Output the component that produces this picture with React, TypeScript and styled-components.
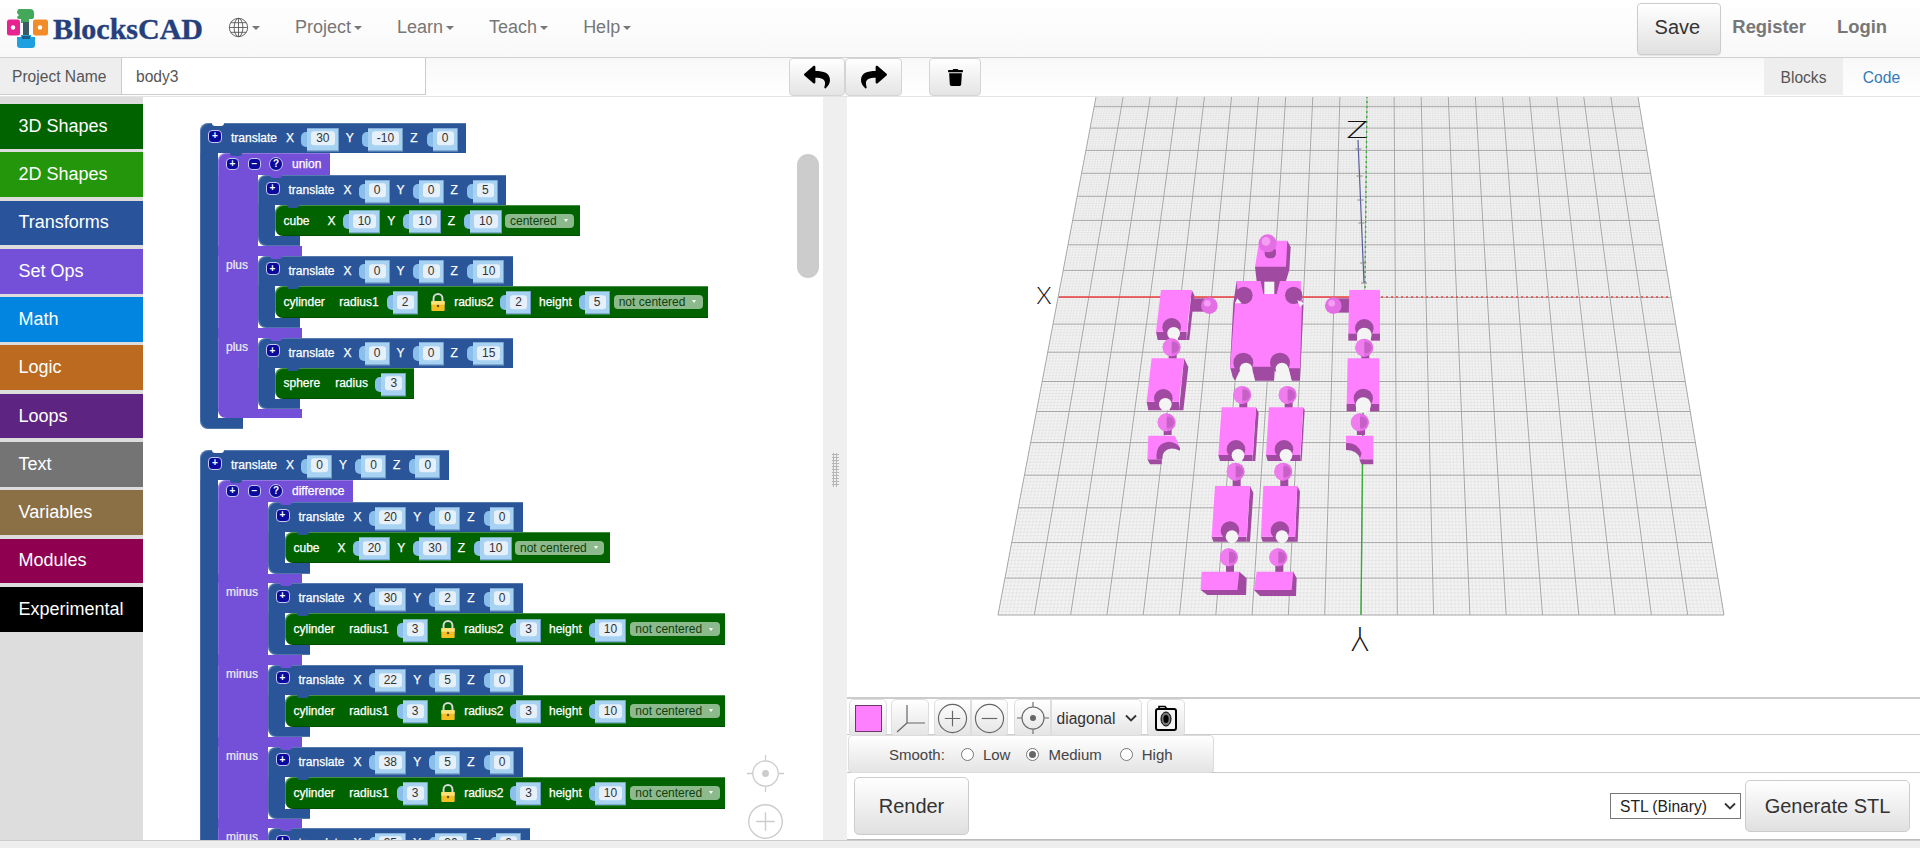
import React from "react";
import styled, { createGlobalStyle } from "styled-components";
import { FaReply, FaShare, FaTrash } from "react-icons/fa";

const Global = createGlobalStyle`
  html, body { margin: 0; padding: 0; background: #fff; }
  body { font-family: "Liberation Sans", Arial, sans-serif; overflow: hidden; }
  * { box-sizing: border-box; }
`;

const BLUE = "#2a5699";
const PURPLE = "#7450d9";
const GREEN = "#006300";

const Page = styled.div`
  width: 1920px; height: 848px; display: flex; flex-direction: column; overflow: hidden; background: #fff;
`;
const Navbar = styled.header`
  height: 58px; flex: none; display: flex; align-items: center; padding: 0 33px 0 7px;
  background: linear-gradient(#fff, #f8f8f8); border-bottom: 1px solid #d0d0d0;
`;
const Brand = styled.div`display: flex; align-items: center; width: 196px; height: 40px;`;
const BrandText = styled.span`
  font-family: "Liberation Serif", serif; font-weight: 700; font-size: 30px; color: #253f7c; margin-left: 4px; line-height: 1; -webkit-text-stroke: 0.4px #253f7c;
`;
const Caret = styled.span`
  display: inline-block; width: 0; height: 0; margin-left: 3px; vertical-align: middle;
  border-top: 4px solid #777; border-left: 4px solid transparent; border-right: 4px solid transparent;
`;
const GlobeWrap = styled.div`display: flex; align-items: center; margin: -2px 0 0 25px; width: 32px; color: #555;`;
const NavItem = styled.a`
  font-size: 18px; color: #777; margin: -3px 0 0 35px; white-space: nowrap; line-height: 24px;
`;
const SaveButton = styled.button`
  margin-left: auto; width: 84px; height: 52px; font: 20px "Liberation Sans", sans-serif; color: #333; margin-right: -1px; transform: translateX(2px);
  background: linear-gradient(#fff, #e0e0e0); border: 1px solid #ccc; border-radius: 4px; padding: 0 4px 2px 0;
  box-shadow: 0 1px 1px rgba(0,0,0,.08);
`;
const NavLink = styled.a<{ $ml: number }>`
  font-size: 18.4px; font-weight: 700; color: #777; margin-left: ${(p) => p.$ml}px; margin-top: -3px;
`;

const SubBar = styled.div`
  height: 39px; flex: none; display: flex; align-items: flex-start; background: linear-gradient(#f8f8f8, #fff);
  border-bottom: 1px solid #e4e4e4;
`;
const Addon = styled.div`
  width: 122px; height: 37px; background: #eee; border: 1px solid #ccc; border-width: 0 1px 1px 0;
  font-size: 15.6px; color: #555; display: flex; align-items: center; padding: 2px 0 0 12px;
`;
const NameInput = styled.div`
  width: 304px; height: 37px; background: #fff; border: 1px solid #ccc; border-width: 0 1px 1px 0;
  font-size: 15.6px; color: #555; display: flex; align-items: center; padding: 2px 0 0 14px;
`;
const ToolBtn = styled.button<{ $w: number; $ml?: number }>`
  width: ${(p) => p.$w}px; height: 38px; margin-left: ${(p) => p.$ml ?? 0}px; padding: 0; color: #000; display: flex; align-items: center; justify-content: center;
  background: linear-gradient(#fff, #e4e4e4); border: 1px solid #d4d4d4; border-radius: 4px;
`;
const Tab = styled.div<{ $active?: boolean }>`
  height: 37px; display: flex; align-items: center; justify-content: center; font-size: 15.6px; padding-top: 2px;
  width: ${(p) => (p.$active ? 79 : 77)}px; margin-left: ${(p) => (p.$active ? "auto" : "0")};
  background: ${(p) => (p.$active ? "#eee" : "transparent")}; color: ${(p) => (p.$active ? "#555" : "#337ab7")};
`;

const Main = styled.div`height: 743px; flex: none; display: flex;`;
const Sidebar = styled.nav`
  width: 143px; flex: none; background: #ddd; padding-top: 7px; display: flex; flex-direction: column; gap: 3.6px;
`;
const Category = styled.div<{ $c: string }>`
  height: 44.7px; background: ${(p) => p.$c}; color: #fff; font-size: 18px; padding-left: 18.5px; display: flex; align-items: center;
`;

const Workspace = styled.section`
  width: 680px; flex: none; position: relative; overflow: hidden; background: #fff; padding: 26px 0 0 57px;
  display: flex; flex-direction: column; align-items: flex-start; gap: 21.6px;
`;
const Scrollbar = styled.div`
  position: absolute; left: 654px; top: 57px; width: 22px; height: 124px; border-radius: 11px; background: #ccc;
`;
const WsControl = styled.div<{ $top: number }>`
  position: absolute; left: 604px; top: ${(p) => p.$top}px; width: 37px; height: 36px;
`;
const Divider = styled.div`
  width: 24px; flex: none; background: #efefef; display: flex; align-items: center; justify-content: center;
`;
const Grip = styled.div`
  width: 7px; height: 34px; transform: translateY(1px);
  background-image: radial-gradient(#b5b5b5 1px, transparent 1.2px); background-size: 3px 3px;
`;

const Viewer = styled.section`flex: 1; display: flex; flex-direction: column; min-width: 0;`;
const Canvas = styled.div`height: 600px; flex: none; background: #fff; overflow: hidden;`;
const Row = styled.div<{ $h: number; $top?: boolean }>`
  height: ${(p) => p.$h}px; flex: none; display: flex; align-items: flex-start; padding-left: 2px;
  background: #fff; border-bottom: 1px solid #ccc; ${(p) => (p.$top ? "border-top: 2px solid #ccc;" : "")}
`;
const Btn = styled.div<{ $w: number; $ml?: number; $join?: "l" | "r" }>`
  width: ${(p) => p.$w}px; height: 38px; margin-left: ${(p) => p.$ml ?? 0}px; display: flex; align-items: center; justify-content: center;
  background: linear-gradient(#fff, #e4e4e4); border: 1px solid #ddd; flex: none; color: #333;
  border-radius: ${(p) => (p.$join === "l" ? "5px 0 0 5px" : p.$join === "r" ? "0 5px 5px 0" : "5px")};
`;
const Swatch = styled.div`width: 27px; height: 27px; background: #ff80ff; border: 1px solid #6b3a6b;`;
const ViewSelect = styled.select`
  appearance: none; font: 15.6px "Liberation Sans", sans-serif; color: #333; background: transparent; border: 0; width: 68px; padding: 0; outline: 0;
`;
const SmoothGroup = styled.div`
  width: 366px; height: 38px; margin-left: -1px; display: flex; align-items: center; padding-left: 40px; font-size: 15px; color: #444;
  background: linear-gradient(#fff, #e4e4e4); border: 1px solid #ddd; border-radius: 4px; box-shadow: 0 1px 1px rgba(0,0,0,.1);
`;
const Radio = styled.span<{ $on?: boolean; $ml: number }>`
  width: 13px; height: 13px; border-radius: 50%; margin: 0 9px 0 ${(p) => p.$ml}px; flex: none; border: 1px solid #777; background: #fff; position: relative;
  ${(p) => (p.$on ? "&::after { content: ''; position: absolute; inset: 2px; border-radius: 50%; background: #666; }" : "")}
`;
const RenderRow = styled.div`
  height: 67px; flex: none; display: flex; align-items: center; padding: 0 10px 0 7px; background: #fff; border-bottom: 1px solid #bbb; position: relative;
`;
const BigBtn = styled.button<{ $w: number; $h: number }>`
  width: ${(p) => p.$w}px; height: ${(p) => p.$h}px; font: 20px "Liberation Sans", sans-serif; color: #333; padding: 0;
  background: linear-gradient(#fff, #e0e0e0); border: 1px solid #ccc; border-radius: 5px;
`;
const FormatBox = styled.div`
  margin-left: auto; margin-right: 4px; width: 131px; height: 26px; display: flex; align-items: center; background: #fff; border: 1px solid #777; padding-left: 9px;
`;
const FormatSelect = styled.select`
  appearance: none; width: 104px; font: 15.6px "Liberation Sans", sans-serif; color: #222; background: transparent; border: 0; padding: 0; outline: 0;
`;
const BottomBand = styled.div`flex: 1; background: #eee; border-top: 1px solid #ccc;`;

/* Blocks */
const CBlock = styled.div`display: flex; flex-direction: column; align-items: flex-start; flex: none;`;
const Notched = styled.div<{ $c: string; $parent: string; $h: number; $pl: number; $pr?: number }>`
  position: relative; display: flex; align-items: center; flex: none; white-space: nowrap;
  height: ${(p) => p.$h}px; background: ${(p) => p.$c}; padding: 0 ${(p) => p.$pr ?? 8.5}px 0 ${(p) => p.$pl}px; color: #fff; font-size: 12px;
  border-radius: 8px 0 0 0;
  box-shadow: inset 1px 1px 0 rgba(255,255,255,.22);
  &::before {
    content: ""; position: absolute; left: 12px; top: 0; width: 12px; height: 3px; background: ${(p) => p.$parent};
    border-radius: 0 0 6px 6px;
  }
`;
const GreenShape = styled(Notched)`
  border-radius: 8px 0 0 8px;
  box-shadow: inset 1px 1px 0 rgba(255,255,255,.28), inset 0 -1px 0 rgba(0,0,0,.2);
`;
const CBody = styled.div`display: flex; align-items: stretch;`;
const CArm = styled.div<{ $c: string; $w: number }>`
  width: ${(p) => p.$w}px; flex: none; background: ${(p) => p.$c}; box-shadow: inset 1px 0 0 rgba(255,255,255,.14);
`;
const CFoot = styled.div<{ $c: string; $w: number; $h: number }>`
  width: ${(p) => p.$w}px; height: ${(p) => p.$h}px; background: ${(p) => p.$c}; border-radius: 0 0 0 8px; box-shadow: inset 1px -1px 0 rgba(255,255,255,.18);
`;
const Label = styled.span<{ $ml?: number }>`
  margin-left: ${(p) => p.$ml ?? 0}px; font-size: 12px; line-height: 14px; color: #fff; -webkit-text-stroke: 0.25px #fff;
`;
const MiniBtn = styled.span<{ $ml?: number; $round?: boolean; $w?: number; $h?: number }>`
  width: ${(p) => p.$w ?? 14}px; height: ${(p) => p.$h ?? 13}px; margin-left: ${(p) => p.$ml ?? 0}px; flex: none; display: flex; align-items: center; justify-content: center;
  background: #0a0a9c; border: 1px solid #c8c8ee; color: #fff; font-size: 10px; font-weight: 700; line-height: 1;
  border-radius: ${(p) => (p.$round ? "50%" : "4px")};
`;
const PlusAt = styled(MiniBtn)`position: relative; top: -2px;`;
const Bump = styled.span<{ $ml: number }>`
  width: 6px; height: 15px; margin-left: ${(p) => p.$ml}px; flex: none; background: #8bbfeb; border-radius: 5px 0 0 5px; transform: translateY(1px);
`;
const FieldBox = styled.span<{ $mr?: number }>`
  height: 23px; display: flex; align-items: center; padding: 0 4px 2px; background: #a8d2f2; margin-right: ${(p) => p.$mr ?? 7}px; flex: none; transform: translateY(1.3px);
  box-shadow: inset -1px -1px 0 #6f9cc8;
`;
const FieldText = styled.span`
  height: 14px; padding: 0 5.15px; line-height: 14px; text-align: center; background: #e6f0fa; color: #333; font-size: 12px; border-radius: 3px;
`;
const Drop = styled.span<{ $ml: number }>`
  height: 14px; margin-left: ${(p) => p.$ml}px; padding: 0 6.5px 0 5px; border-radius: 4px; background: #8cba8c; color: #0f3f0f; font-size: 12px; line-height: 14px; display: flex; align-items: center; gap: 7px; flex: none;
  &::after { content: ""; width: 0; height: 0; border-top: 3px solid #fff; border-left: 2px solid transparent; border-right: 2px solid transparent; }
`;
const SetRow = styled.div`display: flex; align-items: stretch;`;
const SetArm = styled.div<{ $w: number }>`
  width: ${(p) => p.$w}px; flex: none; background: ${PURPLE}; padding: 2px 0 0 8.5px; color: #eee; font-size: 12px; line-height: 14px; box-shadow: inset 1px 0 0 rgba(255,255,255,.15); -webkit-text-stroke: 0.2px #eee;
`;
const Strip = styled.div<{ $end?: boolean }>`
  width: 84px; height: 9.5px; background: ${PURPLE}; border-radius: ${(p) => (p.$end ? "0 0 0 8px" : "0")};
`;

function Field({ v, mr }: { v: string; mr?: number }) {
  return <FieldBox $mr={mr}><FieldText>{v}</FieldText></FieldBox>;
}
function In({ v, ml = 7, mr }: { v: string; ml?: number; mr?: number }) {
  return (<><Bump $ml={ml} /><Field v={v} mr={mr} /></>);
}
function Lock() {
  return (
    <svg width="16" height="20" viewBox="0 0 18 21" style={{ marginLeft: 12.5, marginRight: 8, flex: "none" }}>
      <path d="M4 10V6.5a5 5 0 0 1 10 0V10" fill="none" stroke="#d8d8d8" strokeWidth="2.2" />
      <rect x="1.5" y="9.5" width="15" height="11" rx="1" fill="#f5c022" />
      <rect x="1.5" y="9.5" width="15" height="4" fill="#fde27a" />
      <circle cx="9" cy="15" r="1.4" fill="#6a4c00" />
    </svg>
  );
}
function Translate({ x, y, z, children, parent = PURPLE, pl = 8 }: { x: string; y: string; z: string; children: React.ReactNode; parent?: string; pl?: number }) {
  return (
    <CBlock>
      <Notched $c={BLUE} $parent={parent} $h={30} $pl={pl}>
        <PlusAt>+</PlusAt>
        <Label $ml={9}>translate</Label>
        <Label $ml={9}>X</Label><In v={x} />
        <Label>Y</Label><In v={y} ml={8} />
        <Label>Z</Label><In v={z} ml={9} mr={0} />
      </Notched>
      <CBody>
        <CArm $c={BLUE} $w={17.5} />
        {children}
      </CBody>
      <CFoot $c={BLUE} $w={42.5} $h={10.3} />
    </CBlock>
  );
}
function Cube({ x, y, z, centered }: { x: string; y: string; z: string; centered: string }) {
  return (
    <GreenShape $c={GREEN} $parent={BLUE} $h={31} $pl={8.5} $pr={6}>
      <Label>cube</Label>
      <Label $ml={18}>X</Label><In v={x} />
      <Label>Y</Label><In v={y} ml={8} />
      <Label>Z</Label><In v={z} ml={8.7} mr={0} />
      <Drop $ml={3.5}>{centered}</Drop>
    </GreenShape>
  );
}
function Cylinder({ r1, r2, h, centered }: { r1: string; r2: string; h: string; centered: string }) {
  return (
    <GreenShape $c={GREEN} $parent={BLUE} $h={32} $pl={8.5} $pr={5}>
      <Label>cylinder</Label>
      <Label $ml={14.5}>radius1</Label><In v={r1} ml={8} mr={0} />
      <Lock />
      <Label>radius2</Label><In v={r2} ml={6.5} mr={8} />
      <Label>height</Label><In v={h} ml={7} mr={0} />
      <Drop $ml={4}>{centered}</Drop>
    </GreenShape>
  );
}
function Sphere({ r }: { r: string }) {
  return (
    <GreenShape $c={GREEN} $parent={BLUE} $h={31} $pl={8.5} $pr={7.5}>
      <Label>sphere</Label>
      <Label $ml={15}>radius</Label><In v={r} ml={7.4} mr={0} />
    </GreenShape>
  );
}
function SetBlock({ name, word, arm, rows }: { name: string; word: string; arm: number; rows: React.ReactNode[] }) {
  return (
    <CBlock>
      <Notched $c={PURPLE} $parent={BLUE} $h={22} $pl={8.5}>
        <MiniBtn $w={13} $h={12}>+</MiniBtn>
        <MiniBtn $ml={9} $w={13} $h={12}>−</MiniBtn>
        <MiniBtn $ml={8} $w={14} $h={14} $round>?</MiniBtn>
        <Label $ml={9}>{name}</Label>
      </Notched>
      {rows.map((r, i) => (
        <React.Fragment key={i}>
          <SetRow>
            <SetArm $w={arm}>{i > 0 ? word : ""}</SetArm>
            {r}
          </SetRow>
          <Strip $end={i === rows.length - 1} />
        </React.Fragment>
      ))}
    </CBlock>
  );
}
function Root({ x, y, z, children }: { x: string; y: string; z: string; children: React.ReactNode }) {
  return <Translate x={x} y={y} z={z} parent="#fff">{children}</Translate>;
}

/* Icons */
function Logo() {
  return (
    <svg width="42" height="40" viewBox="0 0 42 40" style={{ flex: "none" }}>
      <path d="M12 6a3 3 0 0 1 3-6h8a4 4 0 0 1 4 4v4a2 2 0 0 1-2 2h-3v4h-8v-4h-2a2 2 0 0 1-2-2z" fill="#43a85a" />
      <rect x="16" y="13" width="6" height="14" fill="#3a5a66" />
      <rect x="0" y="10.5" width="13" height="16" rx="2.5" fill="#e8228e" />
      <circle cx="6" cy="18.5" r="2.2" fill="#fff" />
      <rect x="26" y="10.5" width="15" height="16" rx="2.5" fill="#f28c28" />
      <circle cx="33" cy="18.5" r="2.2" fill="#fff" />
      <path d="M14 26h10v2h4v8a3 3 0 0 1-3 3H13a3 3 0 0 1-3-3v-8h4z" fill="#1e9fe0" />
      <rect x="15" y="27" width="8" height="3" fill="#1b5f8a" />
    </svg>
  );
}
function Globe() {
  return (
    <svg width="25" height="25" viewBox="0 0 24 24" fill="none" stroke="#555" strokeWidth="1">
      <circle cx="12" cy="12" r="10.5" />
      <ellipse cx="12" cy="12" rx="5" ry="10.5" />
      <path d="M12 1.5v21M1.5 12h21M3 6.5h18M3 17.5h18" />
    </svg>
  );
}
function Chevron() {
  return (
    <svg width="12" height="8" viewBox="0 0 12 8" fill="none" stroke="#333" strokeWidth="1.8" style={{ flex: "none" }}>
      <path d="M1 1.5l5 5 5-5" />
    </svg>
  );
}
function TargetIcon({ size = 32, color = "#666" }: { size?: number; color?: string }) {
  return (
    <svg width={size} height={size} viewBox="0 0 32 32" fill="none" stroke={color} strokeWidth="1.1">
      <circle cx="16" cy="16" r="11" />
      <circle cx="16" cy="16" r="3" fill={color} stroke="none" />
      <path d="M16 0v5M16 27v5M0 16h5M27 16h5" />
    </svg>
  );
}
function CircleIcon({ minus, size = 31, color = "#666" }: { minus?: boolean; size?: number; color?: string }) {
  return (
    <svg width={size} height={size} viewBox="0 0 32 32" fill="none" stroke={color} strokeWidth="1.2">
      <circle cx="16" cy="16" r="14.5" />
      <path d={minus ? "M8 16h16" : "M8 16h16M16 8v16"} />
    </svg>
  );
}
function AxisIcon() {
  return (
    <svg width="32" height="30" viewBox="0 0 32 30" fill="none" stroke="#666" strokeWidth="1.2">
      <path d="M13 2v18H31M13 20L3 29" />
    </svg>
  );
}
function CameraIcon() {
  return (
    <svg width="24" height="26" viewBox="0 0 24 26">
      <rect x="2" y="4" width="20" height="21" rx="2" fill="#f4f4f4" stroke="#000" strokeWidth="2" />
      <path d="M5 4V1.5h6L13 4" fill="none" stroke="#000" strokeWidth="1.6" />
      <ellipse cx="12" cy="14" rx="5" ry="7" fill="#777" stroke="#000" strokeWidth="1" />
      <ellipse cx="12" cy="14" rx="2.6" ry="4" fill="#000" />
    </svg>
  );
}

/* 3D scene, in page coordinates */
const MAJOR_Y = [97, 106.7, 128.1, 150.4, 173.3, 196.3, 220.4, 244.8, 270.4, 297.4, 324.1, 352.2, 381.5, 411.5, 442.6, 475.2, 507.8, 542.6, 578.1, 615];
const leftAt = (y: number) => 1096 + ((y - 97) * (998 - 1096)) / 518;
const rightAt = (y: number) => 1638 + ((y - 97) * (1724 - 1638)) / 518;

function GridLines() {
  const hs: React.ReactNode[] = [];
  for (let i = 0; i < MAJOR_Y.length - 1; i++) {
    for (let k = 1; k < 10; k++) {
      const y = MAJOR_Y[i] + ((MAJOR_Y[i + 1] - MAJOR_Y[i]) * k) / 10;
      hs.push(<line key={`h${i}-${k}`} x1={leftAt(y)} x2={rightAt(y)} y1={y} y2={y} stroke="#dcdcdc" strokeWidth={0.45} />);
    }
  }
  const vs: React.ReactNode[] = [];
  for (let i = 0; i <= 200; i++) {
    const t = i / 200;
    const x1 = leftAt(97) + (rightAt(97) - leftAt(97)) * t;
    const x2 = leftAt(615) + (rightAt(615) - leftAt(615)) * t;
    if (i % 10 !== 0) vs.push(<line key={`v${i}`} x1={x1} x2={x2} y1={97} y2={615} stroke="#dcdcdc" strokeWidth={0.45} />);
  }
  const majors: React.ReactNode[] = [];
  for (let i = 0; i <= 20; i++) {
    const t = i / 20;
    majors.push(<line key={`mv${i}`} x1={leftAt(97) + (rightAt(97) - leftAt(97)) * t} x2={leftAt(615) + (rightAt(615) - leftAt(615)) * t} y1={97} y2={615} stroke="#a6a6a6" strokeWidth={1} />);
  }
  MAJOR_Y.forEach((y, i) => {
    if (i > 0) majors.push(<line key={`mh${i}`} x1={leftAt(y)} x2={rightAt(y)} y1={y} y2={y} stroke="#a6a6a6" strokeWidth={1} />);
  });
  return (<g>{hs}{vs}{majors}</g>);
}

const PINK = "#ff80ff";
const DARK = "#a14aa1";
const HOLE = "#f4f4f4";
function Limb({ x, y, w, h, s, d, b, ax, ay, r = 28 }: { x: number; y: number; w: number; h: number; s: number; d: number; b: number; ax: number; ay: number; r?: number }) {
  return (
    <g>
      <polygon points={`${x + w},${y} ${x + w + d},${y + d * 2} ${x + w + d + s},${y + h + b} ${x + w + s},${y + h + b}`} fill={DARK} />
      <polygon points={`${x + s},${y + h} ${x + w + s},${y + h} ${x + w + s},${y + h + b} ${x + s + 5},${y + h + b}`} fill={DARK} />
      <polygon points={`${x},${y} ${x + w},${y} ${x + w + s},${y + h} ${x + s},${y + h}`} fill={PINK} />
      <circle cx={ax} cy={ay} r={r} fill={DARK} />
      <circle cx={ax + 6} cy={ay + 18} r={r - 9} fill={HOLE} />
      <rect x={ax - r * 0.18} y={ay + 18} width={r * 0.85} height={h + b + y - ay - 18} fill={HOLE} />
    </g>
  );
}
function Ball({ x, y, r = 27, neck = 45 }: { x: number; y: number; r?: number; neck?: number }) {
  return (
    <g>
      <rect x={x - 9} y={y} width={24} height={neck} fill={DARK} />
      <circle cx={x} cy={y} r={r} fill="#e46ee4" />
      <circle cx={x + 5} cy={y} r={r * 0.62} fill="#c65fc6" />
      <path d={`M${x} ${y - r} A${r} ${r} 0 0 0 ${x} ${y + r} Z`} fill="#f07cf0" />
    </g>
  );
}
function Figure() {
  return (
    <g transform="translate(1100 220) scale(0.3333)">
      {/* head */}
      <polygon points="562,62 572,82 568,150 558,183 470,183 465,140" fill={DARK} />
      <polygon points="478,62 562,62 558,140 465,140" fill={PINK} />
      <rect x="494" y="80" width="34" height="35" rx="14" fill={DARK} />
      <circle cx="503" cy="70" r="27" fill="#e46ee4" />
      <circle cx="498" cy="64" r="13" fill="#f59cf5" />
      {/* torso */}
      <polygon points="600,183 610,260 600,482 575,482 565,440 525,440 522,482 465,482 455,440 425,440 405,482 398,470 390,440 400,250 410,183" fill={DARK} />
      <path d="M410,183H482L490,222H530L540,183H602L606,250L600,445H565L560,440H455L445,445H390L405,250L415,240Z" fill={PINK} />
      <circle cx="432" cy="226" r="26" fill={DARK} />
      <circle cx="581" cy="226" r="26" fill={DARK} />
      <polygon points="412,235 425,250 405,250" fill={HOLE} />
      <polygon points="592,240 612,250 600,262" fill={HOLE} />
      <rect x="493" y="185" width="30" height="37" fill={HOLE} />
      <circle cx="430" cy="428" r="30" fill={DARK} />
      <circle cx="540" cy="428" r="30" fill={DARK} />
      <circle cx="438" cy="447" r="19" fill={HOLE} />
      <circle cx="546" cy="447" r="19" fill={HOLE} />
      <polygon points="422,447 455,447 465,482 408,482" fill={HOLE} />
      <polygon points="530,447 565,447 575,482 524,482" fill={HOLE} />
      {/* left arm (viewer's left) */}
      <rect x="275" y="235" width="40" height="40" fill={DARK} />
      <circle cx="328" cy="257" r="25" fill="#e46ee4" />
      <circle cx="322" cy="250" r="10" fill="#f59cf5" />
      <Limb x={183} y={210} w={92} h={125} s={-15} d={8} b={25} ax={215} ay={322} />
      <Ball x={215} y={382} neck={36} />
      <Limb x={155} y={415} w={97} h={130} s={-15} d={13} b={26} ax={190} ay={535} />
      <Ball x={200} y={607} neck={38} />
      <polygon points="142,718 185,718 185,733 150,733" fill={DARK} />
      <path d="M145,647 L225,647 L240,685 L235,690 Q205,665 180,690 Q170,705 185,718 L142,718 Z" fill={PINK} />
      <path d="M170,718 Q165,670 205,665 Q230,665 240,685 L240,692 Q215,680 200,690 Q185,700 187,718 Z" fill={DARK} />
      {/* right arm */}
      <rect x="700" y="235" width="50" height="43" fill={DARK} />
      <circle cx="700" cy="257" r="25" fill="#e46ee4" />
      <circle cx="695" cy="250" r="10" fill="#f59cf5" />
      <rect x="745" y="340" width="26" height="22" fill={DARK} />
      <rect x="812" y="340" width="28" height="22" fill={DARK} />
      <polygon points="748,210 840,210 840,340 745,340" fill={PINK} />
      <circle cx="793" cy="325" r="28" fill={DARK} />
      <circle cx="793" cy="345" r="22" fill={HOLE} />
      <rect x="772" y="345" width="40" height="20" fill={HOLE} />
      <Ball x={793} y={383} neck={36} />
      <rect x="740" y="552" width="28" height="22" fill={DARK} />
      <rect x="810" y="552" width="28" height="22" fill={DARK} />
      <polygon points="743,415 838,415 838,552 740,552" fill={PINK} />
      <circle cx="790" cy="535" r="29" fill={DARK} />
      <circle cx="790" cy="555" r="23" fill={HOLE} />
      <rect x="768" y="555" width="42" height="20" fill={HOLE} />
      <Ball x={780} y={607} neck={38} />
      <polygon points="778,718 820,718 820,733 784,733" fill={DARK} />
      <path d="M738,647 L820,647 L820,718 L778,718 L780,700 Q765,672 738,672 Z" fill={PINK} />
      <path d="M738,670 Q770,665 785,700 L780,715 Q770,690 738,690Z" fill={DARK} />
      {/* legs */}
      <Ball x={427} y={525} neck={40} />
      <Ball x={563} y={525} neck={40} />
      <Limb x={365} y={562} w={103} h={143} s={-10} d={8} b={18} ax={408} ay={688} />
      <Limb x={507} y={562} w={103} h={143} s={-9} d={4} b={18} ax={552} ay={688} />
      <Ball x={407} y={755} neck={45} />
      <Ball x={550} y={755} neck={45} />
      <Limb x={345} y={798} w={105} h={152} s={-10} d={10} b={15} ax={390} ay={932} />
      <Limb x={490} y={798} w={102} h={152} s={-7} d={8} b={15} ax={540} ay={932} />
      <Ball x={387} y={1012} neck={45} />
      <Ball x={535} y={1012} neck={45} />
      <polygon points="418,1055 440,1075 438,1125 322,1125 302,1110" fill={DARK} />
      <polygon points="305,1055 418,1055 412,1110 302,1110" fill={PINK} />
      <polygon points="580,1055 590,1075 588,1128 480,1128 462,1110" fill={DARK} />
      <polygon points="470,1055 580,1055 575,1110 462,1110" fill={PINK} />
    </g>
  );
}

const AxisGlyph = styled.text`
  font-family: "Lato", "Liberation Sans", sans-serif; font-weight: 300; fill: #111;
`;
function Scene() {
  const ticks = [149, 176, 200, 223, 263, 283];
  return (
    <svg width="1073" height="600" viewBox="847 97 1073 600">
      <rect x="847" y="97" width="1073" height="600" fill="#fff" />
      <polygon points={`1096,97 1638,97 1724,615 998,615`} fill="#f3f3f3" />
      <GridLines />
      <line x1="1059" y1="297" x2="1365" y2="297" stroke="#f04040" strokeWidth="1.4" />
      <line x1="1381" y1="297" x2="1668" y2="297" stroke="#f04040" strokeWidth="1.4" strokeDasharray="2 3" />
      <line x1="1361" y1="615" x2="1364" y2="298" stroke="#33b033" strokeWidth="1.4" />
      <line x1="1365" y1="288" x2="1367" y2="97" stroke="#33b033" strokeWidth="1.4" strokeDasharray="2 3" />
      <line x1="1358" y1="140" x2="1364" y2="283" stroke="#5a5aa0" strokeWidth="1.2" />
      {ticks.map((t) => {
        const cx = 1358 + ((t - 140) * 6) / 143;
        return <line key={t} x1={cx - 3} x2={cx + 3} y1={t} y2={t} stroke="#888" strokeWidth="1" />;
      })}
      <Figure />
      <AxisGlyph x="1044" y="304" fontSize="24" textAnchor="middle">X</AxisGlyph>
      <AxisGlyph transform="translate(1360 627) scale(1.35 1.5) rotate(180)" x="0" y="0" fontSize="22" textAnchor="middle">Y</AxisGlyph>
      <AxisGlyph transform="translate(1357 138) scale(1.5 1)" x="0" y="0" fontSize="24" textAnchor="middle">Z</AxisGlyph>
    </svg>
  );
}

const CATS: [string, string][] = [
  ["3D Shapes", "#006300"], ["2D Shapes", "#23960b"], ["Transforms", "#29549b"], ["Set Ops", "#7450d9"],
  ["Math", "#0185e0"], ["Logic", "#bb6a1f"], ["Loops", "#5e2482"], ["Text", "#747474"],
  ["Variables", "#8b7045"], ["Modules", "#8f0150"], ["Experimental", "#000000"],
];

export default function App() {
  const cyl = (r: string) => <Cylinder r1={r} r2={r} h="10" centered="not centered" />;
  return (
    <Page>
      <Global />
      <Navbar>
        <Brand><Logo /><BrandText>BlocksCAD</BrandText></Brand>
        <GlobeWrap><Globe /><Caret /></GlobeWrap>
        {["Project", "Learn", "Teach", "Help"].map((n) => (
          <NavItem key={n}>{n}<Caret /></NavItem>
        ))}
        <SaveButton>Save</SaveButton>
        <NavLink $ml={14}>Register</NavLink>
        <NavLink $ml={31}>Login</NavLink>
      </Navbar>
      <SubBar>
        <Addon>Project Name</Addon>
        <NameInput>body3</NameInput>
        <ToolBtn $w={56} $ml={363}><FaReply size={26} /></ToolBtn>
        <ToolBtn $w={57}><FaShare size={26} /></ToolBtn>
        <ToolBtn $w={52} $ml={27}><FaTrash size={17} /></ToolBtn>
        <Tab $active>Blocks</Tab>
        <Tab>Code</Tab>
      </SubBar>
      <Main>
        <Sidebar>
          {CATS.map(([n, c]) => <Category key={n} $c={c}>{n}</Category>)}
        </Sidebar>
        <Workspace>
          <Root x="30" y="-10" z="0">
            <SetBlock name="union" word="plus" arm={40} rows={[
              <Translate x="0" y="0" z="5"><Cube x="10" y="10" z="10" centered="centered" /></Translate>,
              <Translate x="0" y="0" z="10"><Cylinder r1="2" r2="2" h="5" centered="not centered" /></Translate>,
              <Translate x="0" y="0" z="15"><Sphere r="3" /></Translate>,
            ]} />
          </Root>
          <Root x="0" y="0" z="0">
            <SetBlock name="difference" word="minus" arm={50} rows={[
              <Translate x="20" y="0" z="0"><Cube x="20" y="30" z="10" centered="not centered" /></Translate>,
              <Translate x="30" y="2" z="0">{cyl("3")}</Translate>,
              <Translate x="22" y="5" z="0">{cyl("3")}</Translate>,
              <Translate x="38" y="5" z="0">{cyl("3")}</Translate>,
              <Translate x="35" y="30" z="0">{cyl("3")}</Translate>,
            ]} />
          </Root>
          <Scrollbar />
          <WsControl $top={658}><TargetIcon size={37} color="#ccc" /></WsControl>
          <WsControl $top={706}><CircleIcon size={37} color="#ccc" /></WsControl>
        </Workspace>
        <Divider><Grip /></Divider>
        <Viewer>
          <Canvas><Scene /></Canvas>
          <Row $h={38} $top>
            <Btn $w={38}><Swatch /></Btn>
            <Btn $w={38} $ml={4}><AxisIcon /></Btn>
            <Btn $w={37} $ml={5} $join="l"><CircleIcon minus={false} /></Btn>
            <Btn $w={37} $join="r"><CircleIcon minus /></Btn>
            <Btn $w={37} $ml={6} $join="l"><TargetIcon /></Btn>
            <Btn $w={91} $join="r">
              <ViewSelect defaultValue="diagonal"><option>diagonal</option></ViewSelect>
              <Chevron />
            </Btn>
            <Btn $w={38} $ml={5}><CameraIcon /></Btn>
          </Row>
          <Row $h={38}>
            <SmoothGroup>
              Smooth:
              <Radio $ml={16} />Low
              <Radio $ml={16} $on />Medium
              <Radio $ml={18} />High
            </SmoothGroup>
          </Row>
          <RenderRow>
            <BigBtn $w={115} $h={58}>Render</BigBtn>
            <FormatBox>
              <FormatSelect defaultValue="STL (Binary)"><option>STL (Binary)</option></FormatSelect>
              <Chevron />
            </FormatBox>
            <BigBtn $w={165} $h={52}>Generate STL</BigBtn>
          </RenderRow>
        </Viewer>
      </Main>
      <BottomBand />
    </Page>
  );
}
